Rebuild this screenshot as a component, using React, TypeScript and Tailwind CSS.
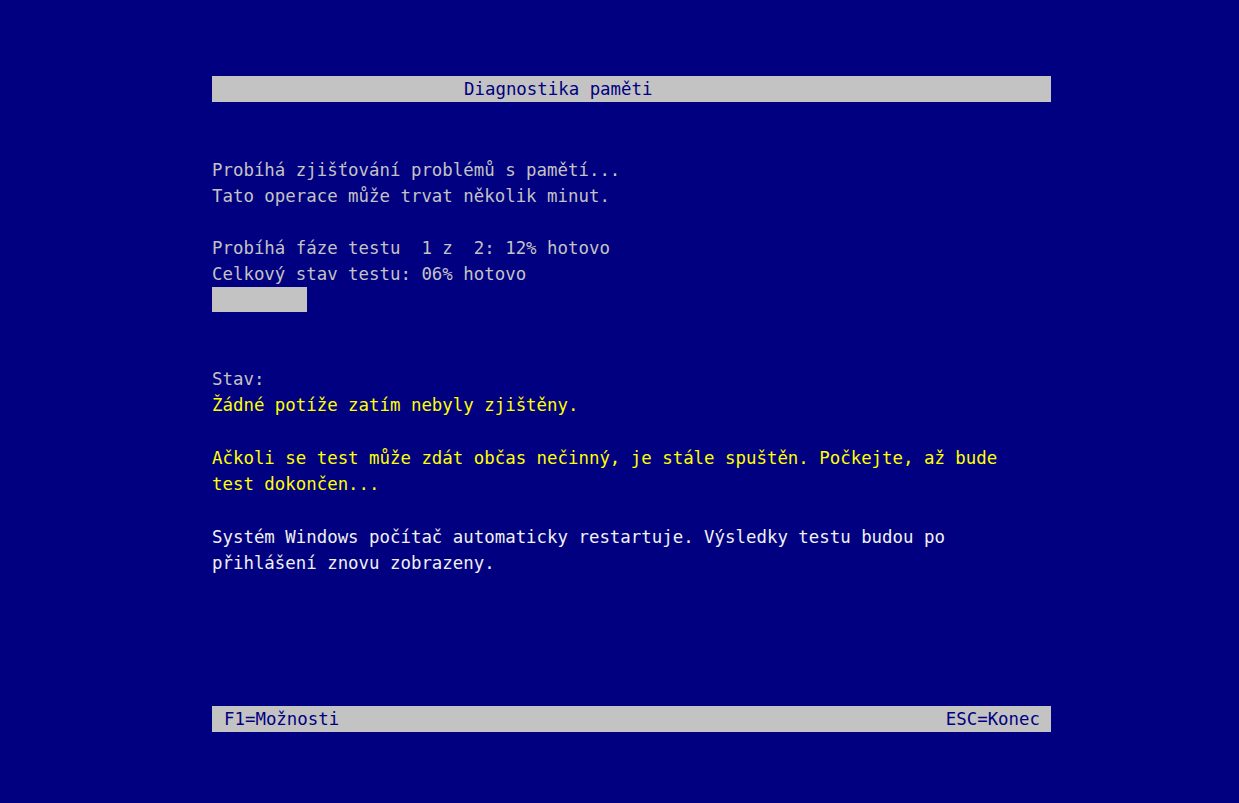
import React from 'react';

const mono = { fontFamily: '"DejaVu Sans Mono", "Liberation Mono", monospace' };

const Line: React.FC<{ children?: React.ReactNode; className?: string }> = ({ children, className }) => (
  <div className={`h-[26px] leading-[26px] whitespace-pre ${className ?? ''}`}>{children ?? ' '}</div>
);

export default function App() {
  return (
    <div className="w-[1239px] h-[803px] bg-[#000080] text-[17.4px] overflow-hidden" style={mono}>
      <div className="ml-[212px] w-[839px] pt-[76px] flex flex-col h-full">
        <div className="h-[26px] leading-[26px] bg-[#c3c3c3] text-[#000080] pl-[252px] whitespace-pre">
          Diagnostika paměti
        </div>

        <div className="mt-[55px] text-[#c3c3c3]">
          <Line>Probíhá zjišťování problémů s pamětí...</Line>
          <Line>Tato operace může trvat několik minut.</Line>
          <Line />
          <Line>Probíhá fáze testu  1 z  2: 12% hotovo</Line>
          <Line>Celkový stav testu: 06% hotovo</Line>
          <div className="h-[26px]">
            <div className="w-[95px] h-[25px] bg-[#c3c3c3]" />
          </div>
          <Line />
          <Line />
          <Line className="mt-[1px]">Stav:</Line>
          <Line className="text-[#ffff00]">Žádné potíže zatím nebyly zjištěny.</Line>
          <Line />
          <Line className="text-[#ffff00] mt-[1px]">
            Ačkoli se test může zdát občas nečinný, je stále spuštěn. Počkejte, až bude
          </Line>
          <Line className="text-[#ffff00]">test dokončen...</Line>
          <Line />
          <Line className="text-[#f0f0f0] mt-[1px]">
            Systém Windows počítač automaticky restartuje. Výsledky testu budou po
          </Line>
          <Line className="text-[#f0f0f0]">přihlášení znovu zobrazeny.</Line>
        </div>

        <div className="mt-[130px] h-[26px] leading-[26px] bg-[#c3c3c3] text-[#000080] flex justify-between pl-[12px] pr-[11px]">
          <span>F1=Možnosti</span>
          <span>ESC=Konec</span>
        </div>
      </div>
    </div>
  );
}
